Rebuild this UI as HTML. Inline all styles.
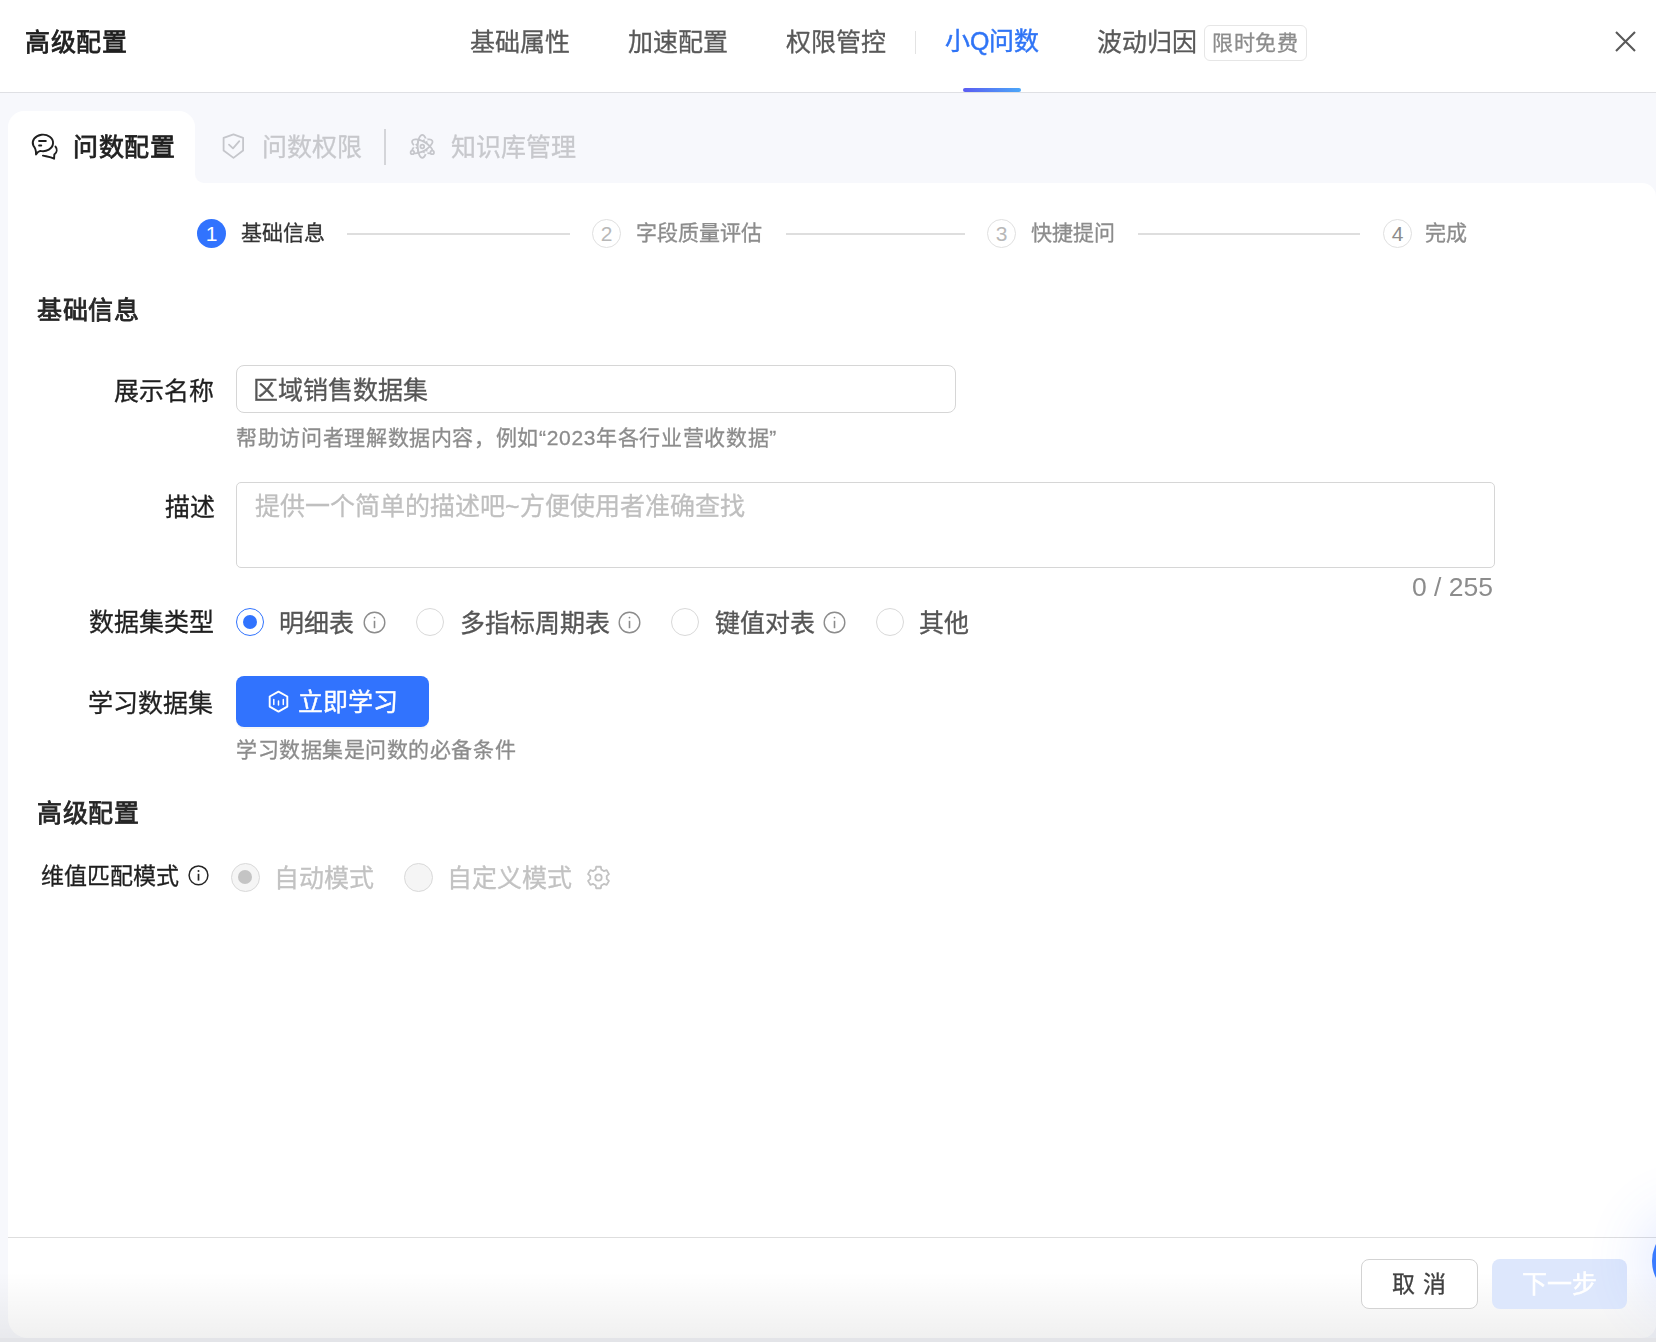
<!DOCTYPE html>
<html lang="zh-CN"><head><meta charset="utf-8"><style>
html,body{margin:0;padding:0;}
body{width:1656px;height:1342px;position:relative;overflow:hidden;background:#f7f8fc;font-family:"Liberation Sans",sans-serif;}
.t{position:absolute;white-space:nowrap;line-height:1;-webkit-text-stroke:0.3px currentColor;will-change:transform;}
.a{position:absolute;}
</style></head><body>
<!-- header -->
<div class="a" style="left:0;top:0;width:1656px;height:92px;background:#fff;border-bottom:1px solid #dfe0e4;"></div>
<div class="a" style="left:915px;top:31px;width:1px;height:23px;background:#e3e3e3;"></div>
<div class="a" style="left:963px;top:88px;width:58px;height:4px;border-radius:2px;background:linear-gradient(90deg,#5b5cf2,#4ba7f8);"></div>
<div class="a" style="left:1204px;top:25px;width:101px;height:34px;border:1px solid #e6e6e6;border-radius:6px;"></div>
<svg class="a" style="left:1612px;top:28px" width="27" height="27" viewBox="0 0 27 27"><path d="M4 4L23 23M23 4L4 23" stroke="#595959" stroke-width="2.1" fill="none"/></svg>
<!-- tabs row -->
<div class="a" style="left:8px;top:111px;width:187px;height:90px;background:#fff;border-radius:16px 16px 0 0;"></div>
<div class="a" style="left:195px;top:165px;width:20px;height:20px;background:#fff;"></div>
<div class="a" style="left:195px;top:111px;width:40px;height:72px;background:#f7f8fc;border-bottom-left-radius:9px;"></div>
<svg class="a" style="left:30px;top:132px" width="30" height="30" viewBox="0 0 30 30" fill="none" stroke="#1f1f1f" stroke-width="1.9" stroke-linejoin="round" stroke-linecap="round">
<path d="M3.36 13.72 A10.15 8.25 0 1 1 10.27 18.87 Q8 19.5 6 22.4 Q6.3 17.2 3.36 13.72 Z"/>
<path d="M9.1 8.9H15.8M9.1 13.4H11.2" stroke-width="2"/>
<path d="M25.5 14.6 C27.3 16.8 27.2 20.2 24.3 22.6 L24.1 26.7 C20.5 24.8 16.5 24.5 12.9 23.6"/>
</svg>
<svg class="a" style="left:221px;top:133px" width="24" height="27" viewBox="0 0 24 27" fill="none" stroke="#c5c6cb" stroke-width="1.8" stroke-linejoin="round" stroke-linecap="round">
<path d="M12.5 1.4 L22.1 4.9 V17.5 L12.5 24.9 L2.6 17.5 V4.9 Z"/>
<path d="M8 11.7 L12 15.3 L18.3 8.1"/>
</svg>
<div class="a" style="left:384px;top:129px;width:2px;height:36px;background:#d4d5d9;"></div>
<svg class="a" style="left:408px;top:132px" width="29" height="29" viewBox="0 0 29 29" fill="none" stroke="#c5c6cb" stroke-width="1.7" stroke-linecap="round">
<ellipse cx="14.3" cy="14.3" rx="4.6" ry="11.5"/>
<ellipse cx="14.3" cy="14.3" rx="4.6" ry="11.5" transform="rotate(60 14.3 14.3)"/>
<ellipse cx="14.3" cy="14.3" rx="4.6" ry="11.5" transform="rotate(-60 14.3 14.3)"/>
<path d="M10.5 7.76 A4.6 11.5 0 0 0 10.54 20.86 A4.6 11.5 60 0 0 21.87 14.28 A4.6 11.5 -60 0 0 10.5 7.76 Z" fill="#f7f8fc"/>
<circle cx="18.06" cy="7.74" r="1.5" fill="#f7f8fc" stroke="none"/>
<circle cx="6.73" cy="14.32" r="1.5" fill="#f7f8fc" stroke="none"/>
<circle cx="18.1" cy="20.84" r="1.5" fill="#f7f8fc" stroke="none"/>
<circle cx="14.3" cy="14.5" r="1.9"/>
<circle cx="4.4" cy="20.4" r="1.8" fill="#f7f8fc"/>
<circle cx="24.2" cy="20.4" r="1.8" fill="#f7f8fc"/>
</svg>
<!-- content panel -->
<div class="a" style="left:8px;top:183px;width:1648px;height:1155px;background:#fff;border-radius:0 14px 14px 20px;"></div>
<!-- steps -->
<div class="a" style="left:197px;top:219px;width:29px;height:29px;border-radius:50%;background:#3173fe;"></div>
<div class="a" style="left:347px;top:233px;width:223px;height:2px;background:#dedede;"></div>
<div class="a" style="left:592px;top:219px;width:27px;height:27px;border-radius:50%;border:1px solid #e0e0e0;"></div>
<div class="a" style="left:786px;top:233px;width:179px;height:2px;background:#dedede;"></div>
<div class="a" style="left:987px;top:219px;width:27px;height:27px;border-radius:50%;border:1px solid #e0e0e0;"></div>
<div class="a" style="left:1138px;top:233px;width:222px;height:2px;background:#dedede;"></div>
<div class="a" style="left:1383px;top:219px;width:27px;height:27px;border-radius:50%;border:1px solid #e0e0e0;"></div>
<!-- inputs -->
<div class="a" style="left:236px;top:365px;width:718px;height:46px;border:1px solid #d6d6d6;border-radius:8px;"></div>
<div class="a" style="left:236px;top:482px;width:1257px;height:84px;border:1px solid #d6d6d6;border-radius:5px;"></div>
<!-- radios -->
<div class="a" style="left:236px;top:608px;width:26px;height:26px;border-radius:50%;border:1.3px solid #3173fe;"></div>
<div class="a" style="left:243px;top:615px;width:14px;height:14px;border-radius:50%;background:#3173fe;"></div>
<div class="a" style="left:416px;top:608px;width:26px;height:26px;border-radius:50%;border:1px solid #d9d9d9;"></div>
<div class="a" style="left:671px;top:608px;width:26px;height:26px;border-radius:50%;border:1px solid #d9d9d9;"></div>
<div class="a" style="left:876px;top:608px;width:26px;height:26px;border-radius:50%;border:1px solid #d9d9d9;"></div>
<!-- button -->
<div class="a" style="left:236px;top:676px;width:193px;height:51px;border-radius:8px;background:#3173fe;box-shadow:0 2px 0 rgba(0,0,0,0.03);"></div>
<svg class="a" style="left:266px;top:689px" width="25" height="25" viewBox="0 0 25 25" fill="none" stroke="#fff" stroke-width="1.9" stroke-linejoin="round" stroke-linecap="round">
<path d="M12.5 2.6 L21.3 7.5 V17.6 L12.5 22.6 L3.7 17.6 V7.5 Z"/>
<path d="M7.8 10.6V15.6M12.5 12V16M17.3 10.6V15.6" stroke-width="1.5"/>
</svg>
<!-- advanced radios -->
<div class="a" style="left:231px;top:863px;width:27px;height:27px;border-radius:50%;border:1px solid #d9d9d9;background:#f5f5f5;"></div>
<div class="a" style="left:238px;top:870px;width:14px;height:14px;border-radius:50%;background:#c4c4c4;"></div>
<div class="a" style="left:404px;top:863px;width:27px;height:27px;border-radius:50%;border:1px solid #d9d9d9;background:#f5f5f5;"></div>
<!-- footer -->
<div class="a" style="left:8px;top:1237px;width:1648px;height:1px;background:#dedede;"></div>
<div class="a" style="left:0;top:1272px;width:1656px;height:66px;background:linear-gradient(rgba(0,0,0,0),rgba(0,0,0,0.058));"></div>
<div class="a" style="left:1361px;top:1259px;width:115px;height:48px;border:1px solid #d3d3d3;border-radius:8px;background:#fff;"></div>
<div class="a" style="left:1492px;top:1259px;width:135px;height:50px;border-radius:8px;background:#dde7fc;"></div>
<div class="a" style="left:1652px;top:1223px;width:76px;height:76px;border-radius:50%;background:#3a7bff;box-shadow:0 0 60px 10px rgba(70,110,255,0.16);"></div>
<!-- bottom fade -->
<div class="a" style="left:0;top:1338px;width:1656px;height:4px;background:#e3e4e8;z-index:5;"></div>
<!-- step numbers -->
<div class="a" style="left:197px;top:219px;width:29px;height:29px;line-height:29px;text-align:center;color:#fff;font-size:21px;">1</div>
<div class="a" style="left:592px;top:219px;width:29px;height:29px;line-height:29px;text-align:center;color:#b8b8b8;font-size:21px;">2</div>
<div class="a" style="left:987px;top:219px;width:29px;height:29px;line-height:29px;text-align:center;color:#b8b8b8;font-size:21px;">3</div>
<div class="a" style="left:1383px;top:219px;width:29px;height:29px;line-height:29px;text-align:center;color:#8c8c8c;font-size:21px;">4</div>
<!-- info icons -->
<svg class="a" style="left:363px;top:611px" width="24" height="24" viewBox="0 0 24 24" fill="none" stroke="#8c8c8c" stroke-width="1.4"><circle cx="11.5" cy="11.5" r="10.3"/><path d="M11.5 9.8V17.2" stroke-width="1.6"/><circle cx="11.5" cy="6.6" r="0.9" fill="#8c8c8c" stroke="none"/></svg>
<svg class="a" style="left:618px;top:611px" width="24" height="24" viewBox="0 0 24 24" fill="none" stroke="#8c8c8c" stroke-width="1.4"><circle cx="11.5" cy="11.5" r="10.3"/><path d="M11.5 9.8V17.2" stroke-width="1.6"/><circle cx="11.5" cy="6.6" r="0.9" fill="#8c8c8c" stroke="none"/></svg>
<svg class="a" style="left:823px;top:611px" width="24" height="24" viewBox="0 0 24 24" fill="none" stroke="#8c8c8c" stroke-width="1.4"><circle cx="11.5" cy="11.5" r="10.3"/><path d="M11.5 9.8V17.2" stroke-width="1.6"/><circle cx="11.5" cy="6.6" r="0.9" fill="#8c8c8c" stroke="none"/></svg>
<svg class="a" style="left:188px;top:865px" width="22" height="22" viewBox="0 0 22 22" fill="none" stroke="#262626" stroke-width="1.5"><circle cx="10.5" cy="10.3" r="9.4"/><path d="M10.5 8.8V15.6" stroke-width="1.7"/><circle cx="10.5" cy="5.9" r="1" fill="#262626" stroke="none"/></svg>
<!-- gear -->
<svg class="a" style="left:586px;top:865px" width="25" height="25" viewBox="0 0 25 25" fill="none" stroke="#c2c2c2" stroke-width="1.8" stroke-linejoin="round">
<path d="M9.66 4.70 L10.21 1.74 L14.79 1.74 L15.34 4.70 A8.3 8.3 0 0 1 17.84 6.14 L17.84 6.14 L20.67 5.14 L22.96 9.10 L20.67 11.06 A8.3 8.3 0 0 1 20.67 13.94 L20.67 13.94 L22.96 15.90 L20.67 19.86 L17.84 18.86 A8.3 8.3 0 0 1 15.34 20.30 L15.34 20.30 L14.79 23.26 L10.21 23.26 L9.66 20.30 A8.3 8.3 0 0 1 7.16 18.86 L7.16 18.86 L4.33 19.86 L2.04 15.90 L4.33 13.94 A8.3 8.3 0 0 1 4.33 11.06 L4.33 11.06 L2.04 9.10 L4.33 5.14 L7.16 6.14 A8.3 8.3 0 0 1 9.66 4.70 Z"/>
<circle cx="12.5" cy="12.5" r="3.2"/>
</svg>

<div class="t" id="h_title" style="left:25.30px;top:30.00px;font-size:25.00px;font-weight:400;color:#1f1f1f;letter-spacing:0.7px;-webkit-text-stroke:0.8px #1f1f1f;">高级配置</div>
<div class="t" id="h_t1" style="left:469.70px;top:29.90px;font-size:25.00px;font-weight:400;color:#595959;">基础属性</div>
<div class="t" id="h_t2" style="left:628.40px;top:29.90px;font-size:25.00px;font-weight:400;color:#595959;">加速配置</div>
<div class="t" id="h_t3" style="left:785.90px;top:30.15px;font-size:25.00px;font-weight:400;color:#595959;">权限管控</div>
<div class="t" id="h_t4" style="left:944.50px;top:28.80px;font-size:25.00px;font-weight:400;color:#2f74f6;-webkit-text-stroke:0.45px #2f74f6;">小Q问数</div>
<div class="t" id="h_t5" style="left:1096.70px;top:30.00px;font-size:25.00px;font-weight:400;color:#595959;">波动归因</div>
<div class="t" id="h_tag" style="left:1212.15px;top:32.05px;font-size:21.00px;font-weight:400;color:#8c8c8c;letter-spacing:0.6px;">限时免费</div>
<div class="t" id="tab1" style="left:72.80px;top:135.35px;font-size:25.00px;font-weight:400;color:#1f1f1f;letter-spacing:0.7px;-webkit-text-stroke:0.8px #1f1f1f;">问数配置</div>
<div class="t" id="tab2" style="left:262.25px;top:135.25px;font-size:25.00px;font-weight:400;color:#c7c8cc;">问数权限</div>
<div class="t" id="tab3" style="left:451.00px;top:135.00px;font-size:25.00px;font-weight:400;color:#c7c8cc;">知识库管理</div>
<div class="t" id="s1" style="left:241.20px;top:222.40px;font-size:21.00px;font-weight:400;color:#333333;">基础信息</div>
<div class="t" id="s2" style="left:635.75px;top:222.40px;font-size:21.00px;font-weight:400;color:#8c8c8c;">字段质量评估</div>
<div class="t" id="s3" style="left:1030.70px;top:222.40px;font-size:21.00px;font-weight:400;color:#8c8c8c;">快捷提问</div>
<div class="t" id="s4" style="left:1425.00px;top:222.40px;font-size:21.00px;font-weight:400;color:#8c8c8c;">完成</div>
<div class="t" id="sec1" style="left:37.25px;top:297.65px;font-size:25.00px;font-weight:400;color:#262626;letter-spacing:0.7px;-webkit-text-stroke:0.8px #262626;">基础信息</div>
<div class="t" id="l1" style="left:113.65px;top:378.85px;font-size:25.00px;font-weight:400;color:#1f1f1f;">展示名称</div>
<div class="t" id="v1" style="left:253.25px;top:378.00px;font-size:25.00px;font-weight:400;color:#555555;">区域销售数据集</div>
<div class="t" id="hp1" style="left:235.90px;top:426.55px;font-size:21.00px;font-weight:400;color:#8c8c8c;letter-spacing:0.65px;">帮助访问者理解数据内容，例如“2023年各行业营收数据”</div>
<div class="t" id="l2" style="left:164.90px;top:495.15px;font-size:25.00px;font-weight:400;color:#1f1f1f;">描述</div>
<div class="t" id="ph" style="left:254.55px;top:493.65px;font-size:25.00px;font-weight:400;color:#bfbfbf;">提供一个简单的描述吧~方便使用者准确查找</div>
<div class="t" id="cnt" style="left:1412.45px;top:573.80px;font-size:26.50px;font-weight:400;color:#8c8c8c;-webkit-text-stroke:0;">0 / 255</div>
<div class="t" id="l3" style="left:88.90px;top:610.40px;font-size:25.00px;font-weight:400;color:#1f1f1f;">数据集类型</div>
<div class="t" id="r1" style="left:278.75px;top:611.10px;font-size:25.00px;font-weight:400;color:#555555;">明细表</div>
<div class="t" id="r2" style="left:459.70px;top:611.00px;font-size:25.00px;font-weight:400;color:#555555;">多指标周期表</div>
<div class="t" id="r3" style="left:715.40px;top:611.00px;font-size:25.00px;font-weight:400;color:#555555;">键值对表</div>
<div class="t" id="r4" style="left:918.60px;top:611.00px;font-size:25.00px;font-weight:400;color:#555555;">其他</div>
<div class="t" id="l4" style="left:88.20px;top:690.70px;font-size:25.00px;font-weight:400;color:#1f1f1f;">学习数据集</div>
<div class="t" id="btn" style="left:297.90px;top:690.15px;font-size:25.00px;font-weight:400;color:#ffffff;-webkit-text-stroke:0.4px #fff;">立即学习</div>
<div class="t" id="hp2" style="left:236.00px;top:739.20px;font-size:21.00px;font-weight:400;color:#8c8c8c;letter-spacing:0.55px;">学习数据集是问数的必备条件</div>
<div class="t" id="sec2" style="left:36.75px;top:801.30px;font-size:25.00px;font-weight:400;color:#262626;letter-spacing:0.7px;-webkit-text-stroke:0.8px #262626;">高级配置</div>
<div class="t" id="l5" style="left:41.45px;top:864.85px;font-size:23.00px;font-weight:400;color:#1f1f1f;">维值匹配模式</div>
<div class="t" id="m1" style="left:273.85px;top:865.65px;font-size:25.00px;font-weight:400;color:#c2c2c2;">自动模式</div>
<div class="t" id="m2" style="left:447.35px;top:865.70px;font-size:25.00px;font-weight:400;color:#c2c2c2;">自定义模式</div>
<div class="t" id="cancel" style="left:1391.70px;top:1273.15px;font-size:23.00px;font-weight:400;color:#404040;letter-spacing:8px;">取消</div>
<div class="t" id="next" style="left:1521.85px;top:1272.25px;font-size:25.00px;font-weight:400;color:#ffffff;-webkit-text-stroke:0.5px #fff;">下一步</div>
</body></html>
